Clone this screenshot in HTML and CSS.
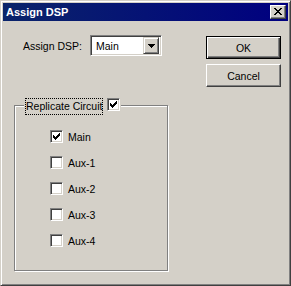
FILE: index.html
```html
<!DOCTYPE html>
<html lang="en">
  <head>
    <meta charset="UTF-8" />
    <title>Assign DSP</title>
    <link rel="stylesheet" href="styles.css">
  </head>
  <body>
    <div class="window">
      <div class="titlebar">
        <span class="title">Assign DSP</span>
        <button class="closeBtn" type="button">
          <svg width="8" height="7" viewBox="0 0 8 7" shape-rendering="crispEdges">
            <path fill="#000" d="M0 0h2v1h-2zM6 0h2v1h-2zM1 1h2v1h-2zM5 1h2v1h-2zM2 2h4v1h-4zM3 3h2v1h-2zM2 4h4v1h-4zM1 5h2v1h-2zM5 5h2v1h-2zM0 6h2v1h-2zM6 6h2v1h-2z"/>
          </svg>
        </button>
      </div>
      <div class="client">
        <div class="leftPane">
          <div class="dspRow">
            <span class="dspLabel">Assign DSP:</span>
            <div class="combo">
              <span class="comboText">Main</span>
              <span class="comboBtn">
                <svg width="7" height="4" viewBox="0 0 7 4" shape-rendering="crispEdges">
                  <path fill="#000" d="M0 0h7v1h-7zM1 1h5v1h-5zM2 2h3v1h-3zM3 3h1v1h-1z"/>
                </svg>
              </span>
            </div>
          </div>
          <div class="group">
            <div class="legend">
              <span class="focusText">Replicate Circuit</span>
              <span class="cb checked">
                <svg width="7" height="7" viewBox="0 0 7 7" shape-rendering="crispEdges">
                  <path fill="#000" d="M0 2h1v3h-1zM1 3h1v3h-1zM2 4h1v3h-1zM3 3h1v3h-1zM4 2h1v3h-1zM5 1h1v3h-1zM6 0h1v3h-1z"/>
                </svg>
              </span>
            </div>
            <div class="checkList">
              <label class="checkRow">
                <span class="cb checked">
                  <svg width="7" height="7" viewBox="0 0 7 7" shape-rendering="crispEdges">
                    <path fill="#000" d="M0 2h1v3h-1zM1 3h1v3h-1zM2 4h1v3h-1zM3 3h1v3h-1zM4 2h1v3h-1zM5 1h1v3h-1zM6 0h1v3h-1z"/>
                  </svg>
                </span>
                <span>Main</span>
              </label>
              <label class="checkRow"><span class="cb"></span><span>Aux-1</span></label>
              <label class="checkRow"><span class="cb"></span><span>Aux-2</span></label>
              <label class="checkRow"><span class="cb"></span><span>Aux-3</span></label>
              <label class="checkRow"><span class="cb"></span><span>Aux-4</span></label>
            </div>
          </div>
        </div>
        <div class="rightPane">
          <button class="btn default" type="button">OK</button>
          <button class="btn" type="button">Cancel</button>
        </div>
      </div>
    </div>
  </body>
</html>
```

FILE: styles.css
```css
body {
  margin: 0;
  background: #d4d0c8;
  font-family: 'Liberation Sans', Arial, sans-serif;
  font-size: 10.5px;
  color: #000;
}
.window {
  width: 291px;
  height: 286px;
  box-sizing: border-box;
  border: 1px solid;
  border-color: #d4d0c8 #404040 #404040 #d4d0c8;
  box-shadow: inset 1px 1px 0 #fff, inset -1px -1px 0 #808080;
  padding: 2px;
  display: flex;
  flex-direction: column;
}
.titlebar {
  height: 18px;
  flex: 0 0 auto;
  display: flex;
  align-items: center;
  justify-content: space-between;
  padding-left: 3px;
  background: linear-gradient(to right, #0a246a, #000080);
}
.title {
  color: #fff;
  font-weight: bold;
  font-size: 11px;
}
.closeBtn {
  width: 16px;
  height: 14px;
  margin-right: 2px;
  padding: 0;
  box-sizing: border-box;
  border: 1px solid;
  border-color: #fff #404040 #404040 #fff;
  box-shadow: inset -1px -1px 0 #808080;
  background: #d4d0c8;
  display: flex;
  align-items: center;
  justify-content: center;
}
.closeBtn svg {
  display: block;
  margin: 0 1px 1px 0;
}
.client {
  flex: 1 1 auto;
  display: flex;
}
.leftPane {
  width: 203px;
  box-sizing: border-box;
  padding: 14px 0 0 11px;
}
.dspRow {
  display: flex;
  align-items: center;
  padding-left: 9px;
}
.dspLabel {
  width: 67px;
}
.combo {
  width: 72px;
  height: 21px;
  box-sizing: border-box;
  border: 1px solid;
  border-color: #808080 #fff #fff #808080;
  box-shadow: inset 1px 1px 0 #404040, inset -1px -1px 0 #d4d0c8;
  background: #fff;
  padding: 2px 2px 2px 5px;
  display: flex;
  align-items: center;
}
.comboText {
  flex: 1 1 auto;
}
.comboBtn {
  width: 16px;
  height: 17px;
  box-sizing: border-box;
  border: 1px solid;
  border-color: #d4d0c8 #404040 #404040 #d4d0c8;
  box-shadow: inset 1px 1px 0 #fff, inset -1px -1px 0 #808080;
  background: #d4d0c8;
  display: flex;
  align-items: center;
  justify-content: center;

  & svg {
    display: block;
  }
}
.group {
  margin-top: 49px;
  width: 154px;
  height: 166px;
  box-sizing: border-box;
  border: 1px solid #808080;
  box-shadow: 1px 1px 0 #fff, inset 1px 1px 0 #fff;
}
.legend {
  margin: -8px 0 0 9px;
  width: fit-content;
  display: flex;
  align-items: flex-start;
  gap: 4px;
  padding: 0 1px;
  background: #d4d0c8;
}
.focusText {
  border: 1px dotted #000;
  padding: 0 0;
  height: 15px;
  line-height: 15px;
}
.cb {
  width: 13px;
  height: 13px;
  flex: 0 0 auto;
  box-sizing: border-box;
  border: 1px solid;
  border-color: #808080 #fff #fff #808080;
  box-shadow: inset 1px 1px 0 #404040, inset -1px -1px 0 #d4d0c8;
  background: #fff;
  padding: 2px 0 0 2px;

  & svg {
    display: block;
  }
}
.checkList {
  margin: 15px 0 0 35px;
  display: flex;
  flex-direction: column;
  gap: 13px;
}
.checkRow {
  display: flex;
  align-items: center;
  gap: 5px;
  height: 13px;
}
.rightPane {
  padding-top: 15px;
  display: flex;
  flex-direction: column;
  gap: 5px;
}
.btn {
  width: 75px;
  height: 23px;
  box-sizing: border-box;
  padding: 0;
  font-family: inherit;
  font-size: 10.5px;
  color: #000;
  background: #d4d0c8;
  border: 1px solid;
  border-color: #fff #404040 #404040 #fff;
  box-shadow: inset -1px -1px 0 #808080;
}
.btn.default {
  border-color: #000;
  box-shadow: inset 1px 1px 0 #fff, inset -1px -1px 0 #404040, inset -2px -2px 0 #808080;
}
```
